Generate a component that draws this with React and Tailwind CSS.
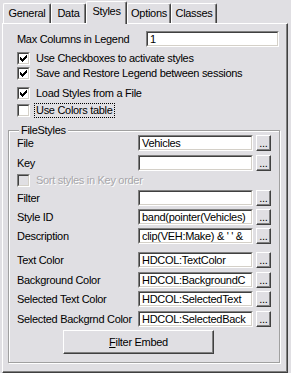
import React from 'react';

function Check({ checked, disabled }) {
  return (
    <div className="w-[13px] h-[13px] shrink-0 border border-t-[#808080] border-l-[#808080] border-b-white border-r-white">
      <div className={`w-full h-full border border-t-[#404040] border-l-[#404040] border-b-[#d4d0c8] border-r-[#d4d0c8] ${disabled ? 'bg-[#e0dfe3]' : 'bg-white'}`}>
        {checked && (
          <svg width="11" height="11" viewBox="0 0 11 11" shapeRendering="crispEdges">
            <rect x="1" y="3" width="1" height="3" fill="#000" />
            <rect x="2" y="4" width="1" height="3" fill="#000" />
            <rect x="3" y="5" width="1" height="3" fill="#000" />
            <rect x="4" y="4" width="1" height="3" fill="#000" />
            <rect x="5" y="3" width="1" height="3" fill="#000" />
            <rect x="6" y="2" width="1" height="3" fill="#000" />
            <rect x="7" y="1" width="1" height="3" fill="#000" />
          </svg>
        )}
      </div>
    </div>
  );
}

function CheckRow({ label, checked, disabled, focused, className }) {
  return (
    <div className={`flex items-center h-[13px] ${className}`}>
      <Check checked={checked} disabled={disabled} />
      <span
        className={`ml-[4px] whitespace-nowrap ${disabled ? 'text-[#a7a6aa] [text-shadow:1px_1px_0_#fff]' : 'text-black'} ${focused ? 'border border-dotted border-black px-[1px]' : 'px-[2px]'}`}
      >
        {label}
      </span>
    </div>
  );
}

function Field({ value, width }) {
  return (
    <div className={`h-[16px] shrink-0 border border-t-[#808080] border-l-[#808080] border-b-white border-r-white ${width}`}>
      <div className="h-full border border-t-[#404040] border-l-[#404040] border-b-[#d4d0c8] border-r-[#d4d0c8] bg-white pl-[2px] overflow-hidden whitespace-nowrap leading-[12px]">
        {value}
      </div>
    </div>
  );
}

function DotsButton() {
  return (
    <div className="ml-[3px] w-[15px] h-[16px] shrink-0 border border-t-white border-l-white border-b-[#404040] border-r-[#404040] shadow-[inset_-1px_-1px_0_#808080] flex items-end justify-center leading-[10px] pb-[2px]">
      ...
    </div>
  );
}

function FieldRow({ label, value, className }) {
  return (
    <div className={`flex items-center h-[16px] ${className}`}>
      <span className="w-[129px] pl-[8px] whitespace-nowrap">{label}</span>
      <Field value={value} width="w-[115px]" />
      <DotsButton />
    </div>
  );
}

function Tab({ label, width, selected }) {
  return (
    <div
      className={`${width} rounded-t-[2px] border-t border-l border-t-white border-l-white border-r border-r-[#404040] shadow-[inset_-1px_0_0_#808080] flex justify-center ${
        selected ? 'relative z-10 h-[23px] mb-[-1px] bg-[#e0dfe3] pt-[3px]' : 'h-[20px] pt-[3px]'
      }`}
    >
      {label}
    </div>
  );
}

export default function App() {
  return (
    <div className="w-[291px] h-[373px] bg-[#e0dfe3] text-black text-[11px] leading-[13px] tracking-[-0.3px] font-['Liberation_Sans',Arial,sans-serif] overflow-hidden">
      {/* tabs */}
      <div className="flex items-end h-[23px] pl-[3px]">
        <Tab label="General" width="w-[48px]" />
        <Tab label="Data" width="w-[35px]" />
        <Tab label="Styles" width="w-[41px]" selected />
        <Tab label="Options" width="w-[44px]" />
        <Tab label="Classes" width="w-[46px]" />
      </div>

      {/* panel */}
      <div className="ml-[2px] w-[286px] h-[350px] border border-t-white border-l-white border-b-[#404040] border-r-[#404040] shadow-[inset_-1px_-1px_0_#808080]">
        <div className="flex items-center h-[16px] mt-[7px] pl-[14px]">
          <span className="w-[129px] whitespace-nowrap">Max Columns in Legend</span>
          <Field value="1" width="w-[133px]" />
        </div>

        <div className="pl-[14px]">
          <CheckRow className="mt-[5px]" label="Use Checkboxes to activate styles" checked />
          <CheckRow className="mt-[2px]" label="Save and Restore Legend between sessions" checked />
          <CheckRow className="mt-[7px]" label="Load Styles from a File" checked />
          <CheckRow className="mt-[4px]" label="Use Colors table" focused />
        </div>

        {/* group box */}
        <div className="relative ml-[5px] mt-[13px] w-[272px] h-[233px] border border-[#a0a0a0] shadow-[1px_1px_0_#fff,inset_1px_1px_0_#fff]">
          <span className="absolute left-[10px] top-[-7px] bg-[#e0dfe3] px-[2px]">FileStyles</span>

          <FieldRow className="mt-[4px]" label="File" value="Vehicles" />
          <FieldRow className="mt-[4px]" label="Key" value="" />
          <div className="pl-[8px]">
            <CheckRow className="mt-[3px]" label="Sort styles in Key order" disabled />
          </div>
          <FieldRow className="mt-[3px]" label="Filter" value="" />
          <FieldRow className="mt-[3px]" label="Style ID" value="band(pointer(Vehicles)" />
          <FieldRow className="mt-[3px]" label="Description" value="clip(VEH:Make) & ' ' &" />
          <FieldRow className="mt-[8px]" label="Text Color" value="HDCOL:TextColor" />
          <FieldRow className="mt-[4px]" label="Background Color" value="HDCOL:BackgroundC" />
          <FieldRow className="mt-[3px]" label="Selected Text Color" value="HDCOL:SelectedText" />
          <FieldRow className="mt-[4px]" label="Selected Backgrnd Color" value="HDCOL:SelectedBack" />

          <div className="mt-[3px] ml-[54px] w-[151px] h-[24px] border border-t-white border-l-white border-b-[#404040] border-r-[#404040] shadow-[inset_-1px_-1px_0_#808080] flex items-center justify-center">
            <span>
              <span className="underline">F</span>ilter Embed
            </span>
          </div>
        </div>
      </div>
    </div>
  );
}
